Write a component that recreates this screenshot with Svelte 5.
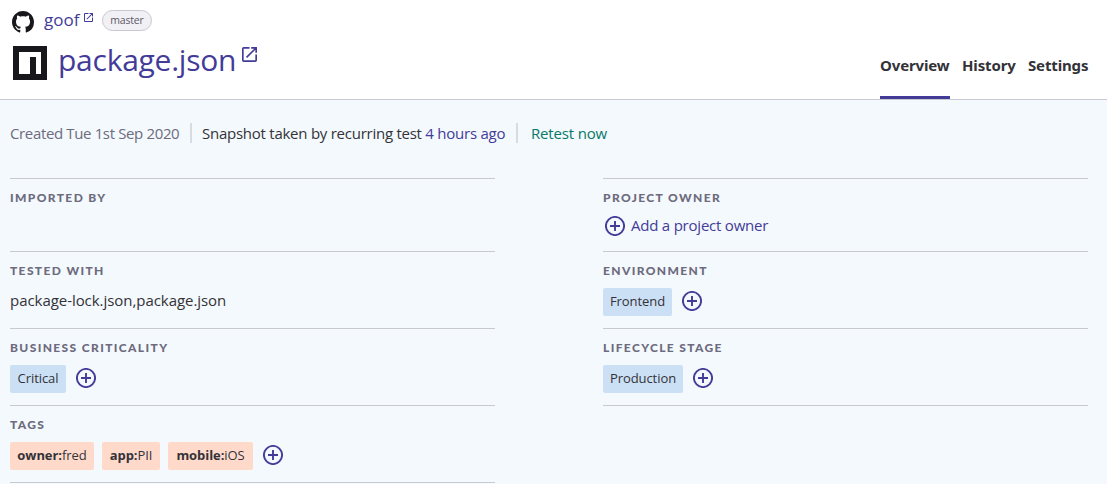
<script>
  const left = [
    { label: 'Imported by', height: 73 },
    { label: 'Tested with', height: 77, text: 'package-lock.json,package.json' },
    { label: 'Business criticality', height: 77, chips: [{ value: 'Critical', w: 56 }] },
    {
      label: 'Tags', height: 77, tags: true,
      chips: [
        { key: 'owner:', value: 'fred', w: 84 },
        { key: 'app:', value: 'PII', w: 58 },
        { key: 'mobile:', value: 'iOS', w: 85 }
      ]
    }
  ];
  const right = [
    { label: 'Project owner', height: 73, owner: true },
    { label: 'Environment', height: 77, chips: [{ value: 'Frontend', w: 69 }] },
    { label: 'Lifecycle stage', height: 77, chips: [{ value: 'Production', w: 80 }] }
  ];
</script>

{#snippet plus()}
  <svg class="plus" viewBox="0 0 20 20"><circle cx="10" cy="10" r="9.1" /><path d="M10 5v10M5 10h10" /></svg>
{/snippet}

{#snippet external(cls)}
  <svg class={cls} viewBox="3 3 18 18"><path d="M19 19H5V5h7V3H5a2 2 0 0 0-2 2v14a2 2 0 0 0 2 2h14a2 2 0 0 0 2-2v-7h-2zM14 3v2h3.59l-9.83 9.83 1.41 1.41L19 6.41V10h2V3z" /></svg>
{/snippet}

{#snippet column(rows)}
  <div class="column">
    {#each rows as row}
      <section style="height: {row.height}px">
        <h2>{row.label}</h2>
        {#if row.text}<p class="files">{row.text}</p>{/if}
        {#if row.owner}<a class="owner">{@render plus()}<span>Add a project owner</span></a>{/if}
        {#if row.chips}
          <div class="chips">
            {#each row.chips as chip}
              <span class="chip" class:tag={row.tags} style="width: {chip.w}px">{#if chip.key}<b>{chip.key}</b>{/if}{chip.value}</span>
            {/each}
            {@render plus()}
          </div>
        {/if}
      </section>
    {/each}
  </div>
{/snippet}

<div class="page">
  <header>
    <div class="titles">
      <div class="repo">
        <svg class="github" viewBox="0 0 16 16"><path d="M8 0C3.58 0 0 3.58 0 8c0 3.54 2.29 6.53 5.47 7.59.4.07.55-.17.55-.38 0-.19-.01-.82-.01-1.49-2.01.37-2.53-.49-2.69-.94-.09-.23-.48-.94-.82-1.13-.28-.15-.68-.52-.01-.53.63-.01 1.08.58 1.23.82.72 1.21 1.87.87 2.33.66.07-.52.28-.87.51-1.07-1.78-.2-3.64-.89-3.64-3.95 0-.87.31-1.59.82-2.15-.08-.2-.36-1.02.08-2.12 0 0 .67-.21 2.2.82.64-.18 1.32-.27 2-.27s1.36.09 2 .27c1.53-1.04 2.2-.82 2.2-.82.44 1.1.16 1.92.08 2.12.51.56.82 1.27.82 2.15 0 3.07-1.87 3.75-3.65 3.95.29.25.54.73.54 1.48 0 1.07-.01 1.93-.01 2.2 0 .21.15.46.55.38A8.01 8.01 0 0 0 16 8c0-4.42-3.58-8-8-8z" /></svg>
        <a class="name">goof</a>
        {@render external('ext-small')}
        <span class="branch">master</span>
      </div>
      <div class="project">
        <svg class="npm" viewBox="0 0 34 34"><path fill-rule="evenodd" d="M0 0h34v34H0zM6 6v22h11V11h6v17h5V6z" /></svg>
        <h1>package.json</h1>
        {@render external('ext-large')}
      </div>
    </div>
    <nav>
      <a class="overview active">Overview</a>
      <a class="history">History</a>
      <a class="settings">Settings</a>
    </nav>
  </header>
  <main>
    <div class="meta">
      <span class="created">Created Tue 1st Sep 2020</span>
      <span class="snapshot">Snapshot taken by recurring test <a>4 hours ago</a></span>
      <span class="retest">Retest now</span>
    </div>
    <div class="columns">
      {@render column(left)}
      {@render column(right)}
    </div>
  </main>
</div>

<style>
  :global(body) { margin: 0; }
  .page {
    width: 1107px; height: 484px; overflow: hidden; background: #f4f9fd;
    font-family: "Open Sans", "Noto Sans", sans-serif; font-size: 15px; letter-spacing: -0.25px;
    color: #333238; box-sizing: border-box;
  }
  .page * { box-sizing: border-box; }
  a { color: #433b98; }
  header {
    height: 100px; background: #fff; border-bottom: 1px solid #c9cad1;
    display: flex; justify-content: space-between; padding: 0 19px 0 12px;
  }
  .repo { display: flex; height: 41px; align-items: flex-start; }
  .github { width: 22px; height: 22px; margin-top: 11px; fill: #17171c; }
  .name { font-size: 17px; letter-spacing: 0; line-height: 24px; margin: 8px 0 0 10px; width: 36px; white-space: nowrap; }
  .ext-small { width: 9px; height: 9px; margin: 13px 0 0 4px; fill: #433b98; }
  .ext-large { width: 15px; height: 15px; margin: 6px 0 0 7px; fill: #433b98; }
  .branch {
    margin: 10px 0 0 9px; width: 50px; height: 21px; border: 1px solid #c9c8ce; border-radius: 11px;
    background: #f1f0f4; color: #5b5967; font-size: 10.5px; letter-spacing: -0.2px; line-height: 19px; text-align: center;
  }
  .project { display: flex; align-items: flex-start; }
  .npm { width: 34px; height: 34px; margin: 5px 0 0 1px; fill: #17171c; }
  h1 {
    margin: -2px 0 0 11px; width: 177px; font-size: 30px; line-height: 42px; font-weight: 400;
    letter-spacing: -0.25px; color: #433b98; white-space: nowrap;
  }
  nav { display: flex; gap: 12px; align-items: flex-end; letter-spacing: -0.15px; }
  nav a {
    height: 45px; line-height: 22px; font-family: "Noto Sans", sans-serif; font-size: 15px; font-weight: 700;
    color: #333238; border-bottom: 3px solid transparent; white-space: nowrap;
  }
  nav .active { border-color: #433b98; }
  .overview { width: 70px; }
  .history { width: 54px; }
  .settings { width: 60px; }
  main { padding: 0 19px 0 10px; }
  .meta { display: flex; height: 78px; padding-top: 23px; line-height: 21px; white-space: nowrap; }
  .created { width: 182px; height: 20px; color: #6d6b7d; letter-spacing: -0.36px; border-right: 2px solid #d8dbe1; }
  .snapshot { width: 326px; height: 20px; padding-left: 10px; border-right: 2px solid #d8dbe1; }
  .retest { padding-left: 13px; color: #077868; letter-spacing: -0.17px; }
  .columns { display: flex; justify-content: space-between; }
  .column { width: 485px; border-bottom: 1px solid #c9cad1; align-self: flex-start; }
  section { border-top: 1px solid #c9cad1; padding-top: 10px; }
  h2 {
    margin: 0; font-family: Lato, sans-serif; font-size: 12px; line-height: 18px; font-weight: 900;
    letter-spacing: 1.37px; text-transform: uppercase; color: #6d6b7d; white-space: nowrap;
  }
  .files { margin: 10px 0 0; line-height: 20px; letter-spacing: -0.05px; }
  .chips { display: flex; align-items: center; gap: 8px; margin-top: 8px; height: 28px; }
  .chip {
    height: 28px; border-radius: 2px; background: #cce0f5; font-size: 13px; line-height: 26px;
    text-align: center; white-space: nowrap; letter-spacing: -0.07px;
  }
  .chip.tag { background: #ffdacb; }
  .plus { width: 20px; height: 20px; fill: none; stroke: #433b98; stroke-width: 1.9; flex: none; }
  .chips .plus { margin: -2px 0 0 2px; }
  .owner { display: flex; align-items: center; height: 24px; margin: 7px 0 0 2px; gap: 6px; line-height: 22px; letter-spacing: -0.22px; }
  .owner span { margin-top: -2px; }
</style>
